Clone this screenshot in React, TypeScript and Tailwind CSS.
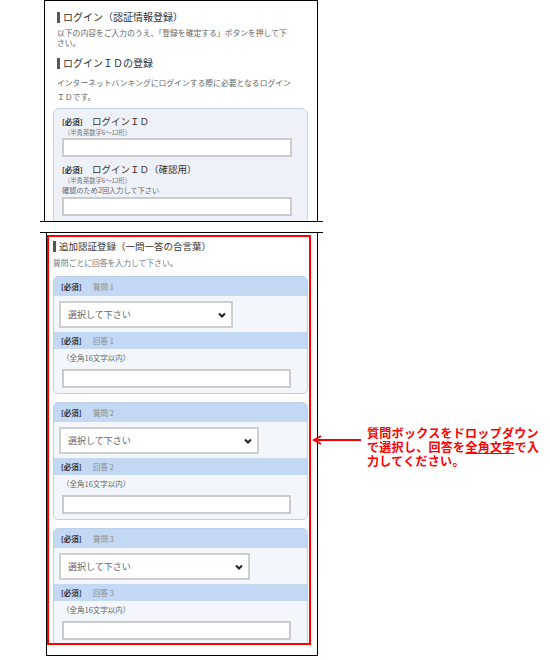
import React from 'react';

const jp = "font-['Noto_Sans_CJK_JP','Noto_Sans',sans-serif]";

const Heading: React.FC<{ text: string; size: string }> = ({ text, size }) => (
  <div className={`flex items-center gap-[3px] ml-[4px] leading-[14px] text-[#333] ${size}`}>
    <span className="w-[3px] h-[11px] bg-[#555]" />
    <span>{text}</span>
  </div>
);

const Chevron = () => (
  <svg width="8" height="6" viewBox="0 0 8 6">
    <polyline points="1,1.5 4,4.5 7,1.5" fill="none" stroke="#222" strokeWidth="2" />
  </svg>
);

const questions = [
  { no: 1, selectWidth: 'w-[174px]' },
  { no: 2, selectWidth: 'w-[200px]' },
  { no: 3, selectWidth: 'w-[191px]' },
];

const QuestionCard: React.FC<{ no: number; selectWidth: string }> = ({ no, selectWidth }) => (
  <div className="ml-[4px] w-[255px] shrink-0 rounded-[5px] border border-[#bcd0ea] bg-[#f3f7fc] overflow-hidden">
    {/* question header */}
    <div className="h-[19px] bg-[#c3d8f3] flex items-center pl-[7px] text-[7.5px] leading-none">
      <span className="font-bold text-[#333] w-[32px]">[必須]</span>
      <span className="text-[#8a8a8a]">質問 {no}</span>
    </div>
    <div
      className={`mt-[5px] ml-[5px] h-[27px] ${selectWidth} border-2 border-[#cfcfcf] bg-white flex items-center justify-between pl-[7px] pr-[5px]`}
    >
      <span className="text-[9px] text-[#666] leading-none">選択して下さい</span>
      <Chevron />
    </div>
    {/* answer header */}
    <div className="mt-[4px] h-[17px] bg-[#c3d8f3] flex items-center pl-[7px] text-[7.5px] leading-none">
      <span className="font-bold text-[#333] w-[32px]">[必須]</span>
      <span className="text-[#8a8a8a]">回答 {no}</span>
    </div>
    <p className="mt-[4px] ml-[8px] text-[7.5px] leading-[10px] text-[#666]">（全角16文字以内）</p>
    <div className="mt-[6px] ml-[8px] mb-[5px] w-[229px] h-[19px] border-2 border-[#cccccc] bg-white" />
  </div>
);

export default function App() {
  return (
    <div className={`w-[550px] h-[660px] bg-white overflow-hidden ${jp}`}>
      {/* Top frame: login ID registration */}
      <div className="ml-[44px] w-[274px] h-[221px] border-x border-t border-black overflow-hidden px-[8px] pt-[9px]">
        <Heading text="ログイン（認証情報登録）" size="text-[10px]" />
        <p className="mt-[4px] ml-[4px] text-[7.8px] leading-[10px] text-[#666] whitespace-nowrap">
          以下の内容をご入力のうえ、「登録を確定する」ボタンを押して下
          <br />
          さい。
        </p>
        <div className="mt-[8px]">
          <Heading text="ログインＩＤの登録" size="text-[10px]" />
        </div>
        <p className="mt-[6px] ml-[4px] text-[7.8px] leading-[14px] text-[#666] whitespace-nowrap">
          インターネットバンキングにログインする際に必要となるログイン
          <br />
          ＩＤです。
        </p>
        <div className="mt-[4px] w-[255px] h-[140px] rounded-[6px] border border-[#c6d7ec] bg-[#eef2f8] pl-[8px] pt-[6px]">
          <div className="flex items-center h-[14px] leading-none">
            <span className="text-[7.5px] font-bold text-[#333] w-[30px]">[必須]</span>
            <span className="text-[9.5px] text-[#333]">ログインＩＤ</span>
          </div>
          <p className="ml-[2px] text-[6.3px] leading-[8px] text-[#777]">（半角英数字6～12桁）</p>
          <div className="mt-[1px] w-[230px] h-[19px] border-2 border-[#cccccc] bg-white" />
          <div className="mt-[6px] flex items-center h-[14px] leading-none">
            <span className="text-[7.5px] font-bold text-[#333] w-[30px]">[必須]</span>
            <span className="text-[9.5px] text-[#333]">ログインＩＤ（確認用）</span>
          </div>
          <p className="ml-[2px] text-[6.3px] leading-[8px] text-[#777]">（半角英数字6～12桁）</p>
          <p className="text-[7.2px] leading-[10px] text-[#666]">確認のため2回入力して下さい</p>
          <div className="mt-[2px] w-[230px] h-[19px] border-2 border-[#cccccc] bg-white" />
        </div>
      </div>

      {/* page break lines */}
      <div className="ml-[40px] w-[283px] h-px bg-black" />
      <div className="mt-[10px] ml-[40px] w-[283px] h-px bg-black" />

      {/* Bottom frame: additional authentication */}
      <div className="flex items-center">
        <div className="ml-[46px] w-[272px] h-[423px] shrink-0 border-x border-b border-black pt-[2px]">
          <div className="w-[264px] h-[410px] border-2 border-[#ff0000] overflow-hidden pt-[2px]">
            <Heading text="追加認証登録（一問一答の合言葉）" size="text-[9.5px]" />
            <p className="mt-[5px] ml-[4px] text-[7.8px] leading-[10px] text-[#777]">
              質問ごとに回答を入力して下さい。
            </p>
            <div className="mt-[8px] flex flex-col gap-[8px]">
              {questions.map((q) => (
                <QuestionCard key={q.no} no={q.no} selectWidth={q.selectWidth} />
              ))}
            </div>
          </div>
        </div>

        {/* annotation */}
        <div className="flex items-start -ml-[6px] mt-[4px]">
          <svg width="50" height="10" viewBox="0 0 50 10" className="mt-[9px] shrink-0">
            <line x1="2" y1="5" x2="49" y2="5" stroke="#ff0000" strokeWidth="2" />
            <polyline points="9,1 2,5 9,9" fill="none" stroke="#ff0000" strokeWidth="2" />
          </svg>
          <p className="ml-[5px] text-[12px] tracking-[0.3px] leading-[14px] font-bold text-[#ff0000] whitespace-nowrap">
            質問ボックスをドロップダウン
            <br />
            で選択し、回答を<span className="underline">全角文字</span>で入
            <br />
            力してください。
          </p>
        </div>
      </div>
    </div>
  );
}
